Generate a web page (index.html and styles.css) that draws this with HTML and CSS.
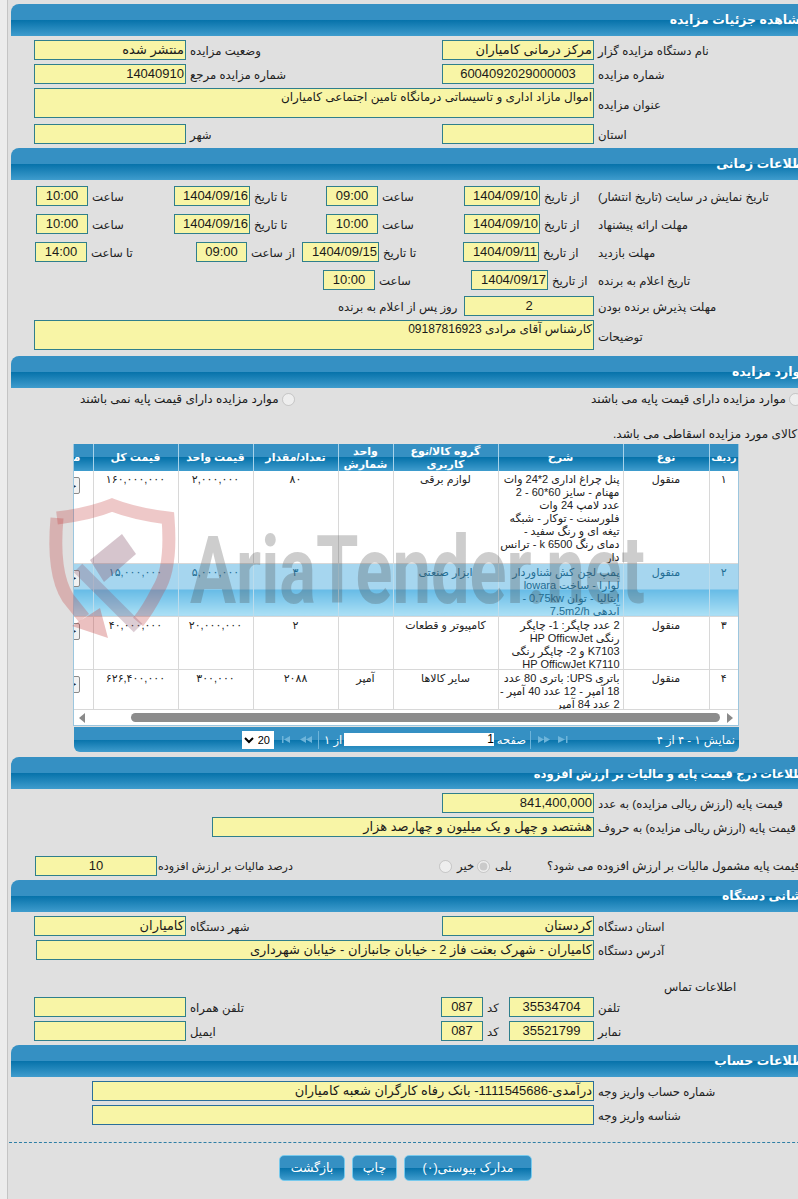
FILE: index.html
```html
<!DOCTYPE html>
<html lang="fa">
<head>
<meta charset="utf-8">
<title>مشاهده جزئیات مزایده</title>
<link rel="stylesheet" href="styles.css">
</head>
<body>
<div class="page">

<h2 class="sec">مشاهده جزئیات مزایده</h2>
<div class="row g-main mt4"><div class="f">منتشر شده</div><div class="l">وضعیت مزایده</div><div class="f">مرکز درمانی کامیاران</div><div class="l">نام دستگاه مزایده گزار</div></div>
<div class="row g-main mt4"><div class="f">14040910</div><div class="l">شماره مزایده مرجع</div><div class="f ctr">6004092029000003</div><div class="l">شماره مزایده</div></div>
<div class="row g-wide mt4 tall"><div class="f">اموال مازاد اداری و تاسیساتی درمانگاه تامین اجتماعی کامیاران</div><div class="l">عنوان مزایده</div></div>
<div class="row g-main mt6"><div class="f"></div><div class="l">شهر</div><div class="f"></div><div class="l">استان</div></div>

<h2 class="sec mt4">اطلاعات زمانی</h2>
<div class="row g-ta mt6"><div class="f ctr">10:00</div><div class="l">ساعت</div><div class="f">1404/09/16</div><div class="l">تا تاریخ</div><div class="f ctr">09:00</div><div class="l">ساعت</div><div class="f">1404/09/10</div><div class="l">از تاریخ</div><div class="l">تاریخ نمایش در سایت (تاریخ انتشار)</div></div>
<div class="row g-ta mt8"><div class="f ctr">10:00</div><div class="l">ساعت</div><div class="f">1404/09/16</div><div class="l">تا تاریخ</div><div class="f ctr">10:00</div><div class="l">ساعت</div><div class="f">1404/09/10</div><div class="l">از تاریخ</div><div class="l">مهلت ارائه پیشنهاد</div></div>
<div class="row g-tc mt8"><div class="f ctr">14:00</div><div class="l">تا ساعت</div><div class="f ctr">09:00</div><div class="l">از ساعت</div><div class="f">1404/09/15</div><div class="l">تا تاریخ</div><div class="f">1404/09/11</div><div class="l">از تاریخ</div><div class="l">مهلت بازدید</div></div>
<div class="row g-td mt8"><div class="f ctr">10:00</div><div class="l">ساعت</div><div class="f">1404/09/17</div><div class="l">از تاریخ</div><div class="l">تاریخ اعلام به برنده</div></div>
<div class="row g-te mt6"><div class="l flush">روز پس از اعلام به برنده</div><div class="f ctr">2</div><div class="l">مهلت پذیرش برنده بودن</div></div>
<div class="row g-wide mt4 tall"><div class="f">کارشناس آقای مرادی 09187816923</div><div class="l">توضیحات</div></div>

<h2 class="sec mt6">موارد مزایده</h2>
<div class="radios">
  <label class="rad rad-no"><span>موارد مزایده دارای قیمت پایه نمی باشند</span><input type="radio" disabled></label>
  <label class="rad rad-yes"><span>موارد مزایده دارای قیمت پایه می باشند</span><input type="radio" disabled></label>
</div>
<div class="note"><span class="note-t">کالای مورد مزایده اسقاطی می باشد.</span></div>

<div class="grid">
  <table>
    <colgroup><col class="c1"><col class="c2"><col class="c3"><col class="c4"><col class="c5"><col class="c6"><col class="c7"><col class="c8"><col class="c9"></colgroup>
    <thead><tr><th class="th-narrow">ردیف</th><th>نوع</th><th>شرح</th><th>گروه کالا/نوع<br>کاربری</th><th>واحد<br>شمارش</th><th>تعداد/مقدار</th><th>قیمت واحد</th><th>قیمت کل</th><th>مدارک</th></tr></thead>
    <tbody>
      <tr class="h92"><td>۱</td><td>منقول</td><td class="desc"><div class="ln">پنل چراغ اداری 2*24 وات<br>مهنام - سایز 60*60 - 2<br>عدد لامپ 24 وات<br>فلورسنت - توکار - شبگه<br>تیغه ای و رنگ سفید -<br>دمای رنگ k 6500 - ترانس<br>دار</div></td><td>لوازم برقی</td><td></td><td>۸۰</td><td>۲,۰۰۰,۰۰۰</td><td>۱۶۰,۰۰۰,۰۰۰</td><td class="act"><button class="mini">جزئیات</button></td></tr>
      <tr class="h53 hot"><td>۲</td><td>منقول</td><td class="desc"><div class="ln">پمپ لجن کش شناوردار<br>لوارا - ساخت lowara<br>ایتالیا - توان 0.75kw -<br>آبدهی 7.5m2/h</div></td><td>ابزار صنعتی</td><td></td><td>۳</td><td>۵,۰۰۰,۰۰۰</td><td>۱۵,۰۰۰,۰۰۰</td><td class="act"><button class="mini">جزئیات</button></td></tr>
      <tr class="h53"><td>۳</td><td>منقول</td><td class="desc"><div class="ln">2 عدد چاپگر: 1- چاپگر<br>رنگی HP OfficwJet<br>K7103 و 2- چاپگر رنگی<br>HP OfficwJet K7110</div></td><td>کامپیوتر و قطعات</td><td></td><td>۲</td><td>۲۰,۰۰۰,۰۰۰</td><td>۴۰,۰۰۰,۰۰۰</td><td class="act"><button class="mini">جزئیات</button></td></tr>
      <tr class="h40"><td>۴</td><td>منقول</td><td class="desc"><div class="ln">باتری UPS: باتری 80 عدد<br>18 آمپر - 12 عدد 40 آمپر -<br>2 عدد 84 آمپر</div></td><td>سایر کالاها</td><td>آمپر</td><td>۲۰۸۸</td><td>۳۰۰,۰۰۰</td><td>۶۲۶,۴۰۰,۰۰۰</td><td class="act"><button class="mini">جزئیات</button></td></tr>
    </tbody>
  </table>
  <div class="hscroll">
    <svg class="arr" width="6" height="10" viewBox="0 0 6 10"><path d="M6 0v10L0 5z"/></svg>
    <div class="thumb"></div>
    <svg class="arr" width="6" height="10" viewBox="0 0 6 10"><path d="M0 0v10l6-5z"/></svg>
  </div>
</div>
<div class="pager">
  <select class="psize"><option>20</option></select>
  <svg class="pi pi-first" width="8" height="7" viewBox="0 0 8 7"><path d="M0 0h1.500v7H0zM8 0v7L2 3.500z"/></svg>
  <svg class="pi pi-prev" width="12" height="7" viewBox="0 0 12 7"><path d="M6 0v7L0 3.500zM12 0v7L6 3.500z"/></svg>
  <span class="psep sep-a"></span>
  <span class="pt pt-of">از ۱</span>
  <input class="pnum" type="text" value="1" readonly>
  <span class="pt pt-page">صفحه</span>
  <span class="psep sep-b"></span>
  <svg class="pi pi-next" width="12" height="7" viewBox="0 0 12 7"><path d="M0 0v7l6-3.500zM6 0v7l6-3.500z"/></svg>
  <svg class="pi pi-last" width="10" height="7" viewBox="0 0 10 7"><path d="M0 0v7l7-3.500zM8 0h1.500v7H8z"/></svg>
  <span class="pt pt-info">نمایش ۱ - ۴ از ۴</span>
</div>

<h2 class="sec sec-long mt5">اطلاعات درج قیمت پایه و مالیات بر ارزش افزوده</h2>
<div class="row g-price mt4"><div class="f">841,400,000</div><div class="l">قیمت پایه (ارزش ریالی مزایده) به عدد</div></div>
<div class="row g-words mt4"><div class="f">هشتصد و چهل و یک میلیون و چهارصد هزار</div><div class="l">قیمت پایه (ارزش ریالی مزایده) به حروف</div></div>
<div class="row g-vat mt19">
  <div class="f ctr">10</div><div class="l sm">درصد مالیات بر ارزش افزوده</div>
  <input type="radio" disabled><span class="l pad5">خیر</span><input type="radio" checked disabled><span class="l pad5">بلی</span><div class="l flush">قیمت پایه مشمول مالیات بر ارزش افزوده می شود؟</div>
</div>

<h2 class="sec mt4">نشانی دستگاه</h2>
<div class="row g-main mt4"><div class="f">کامیاران</div><div class="l">شهر دستگاه</div><div class="f">کردستان</div><div class="l">استان دستگاه</div></div>
<div class="row g-addr mt4"><div class="f">کامیاران - شهرک بعثت فاز 2 - خیابان جانبازان - خیابان شهرداری</div><div class="l">آدرس دستگاه</div></div>
<div class="contact">اطلاعات تماس</div>
<div class="row g-tel"><div class="f"></div><div class="l">تلفن همراه</div><div class="f ctr">087</div><div class="l">کد</div><div class="f ctr">35534704</div><div class="l">تلفن</div></div>
<div class="row g-tel mt4"><div class="f"></div><div class="l">ایمیل</div><div class="f ctr">087</div><div class="l">کد</div><div class="f ctr">35521799</div><div class="l">نمابر</div></div>

<h2 class="sec mt4">اطلاعات حساب</h2>
<div class="row g-acc mt4"><div class="f blue">درآمدی-1111545686- بانک رفاه کارگران شعبه کامیاران</div><div class="l">شماره حساب واریز وجه</div></div>
<div class="row g-acc mt4"><div class="f blue"></div><div class="l">شناسه واریز وجه</div></div>
<div class="dash"></div>
<div class="btns">
  <button class="btn b-back">بازگشت</button>
  <button class="btn b-print">چاپ</button>
  <button class="btn b-docs">مدارک پیوستی(۰)</button>
</div>

</div>

<svg class="wm" width="660" height="150" viewBox="0 0 660 150" aria-hidden="true">
  <g class="wm-shield">
    <path class="wm-s" d="M57 20Q90 16 112 7Q135 16 168 20Q172 70 158 92Q148 112 138 124"/>
    <path class="wm-s" d="M57 20Q52 75 68 100L84 120"/>
    <path class="wm-a" d="M100 110L108 140L72 128z"/>
    <path class="wm-v" d="M78 70L138 130"/>
    <path class="wm-g" d="M90 62L122 36L136 56L104 84z"/>
  </g>
  <text class="wm-t" x="190" y="105" textLength="455" lengthAdjust="spacingAndGlyphs">AriaTender.net</text>
</svg>
</body>
</html>
```
FILE: styles.css
```css
* { box-sizing: border-box; }
html, body { margin: 0; padding: 0; height: 1199px; overflow: hidden; }
body {
  position: relative;
  background: #e0e0e0;
  color: #1a1a1a;
  font: 11.700px/20px "Liberation Sans", "DejaVu Sans", sans-serif;
}
.page {
  width: 840px;
  height: 1199px;
  padding: 4px 0 0 6px;
  background: #e0e0e0;
  position: relative;
}
.page::before {
  content: "";
  position: absolute;
  left: 0; top: 0; bottom: 0;
  width: 7px;
  background: #ececec;
  border-right: 1px solid #c4c4c4;
}
.sec {
  margin: 0 0 0 5px;
  height: 32px;
  padding: 0 32px 0 0;
  border-radius: 8px 0 0 0;
  background: linear-gradient(#3590c3 0, #3590c3 50%, #0672aa 50%, #3f9ccd 100%);
  color: #fff;
  font: bold 12.500px/33px "Liberation Sans", "DejaVu Sans", sans-serif;
  direction: rtl;
  text-align: right;
  white-space: nowrap;
}
.sec-long { font-size: 11.600px; }
.mt4 { margin-top: 4px; }
.mt5 { margin-top: 5px; }
.mt6 { margin-top: 6px; }
.mt8 { margin-top: 8px; }
.mt19 { margin-top: 19px; }

.row { display: grid; height: 20px; grid-template-rows: 20px; align-items: stretch; }
.row.tall { height: 30px; grid-template-rows: 30px; }
.f {
  height: 100%;
  border: 1px solid #2f7f8c;
  background: #f8f5a6;
  direction: rtl;
  text-align: right;
  padding: 0 1px;
  font-size: 13px;
  line-height: 18px;
  white-space: nowrap;
  overflow: hidden;
}
.tall .f { font-size: 12px; line-height: 16px; }
.tall .l { line-height: 34px; }
.f.ctr { text-align: center; }
.f.blue { border-color: #2a6f9a; }
.l {
  direction: rtl;
  text-align: left;
  padding-left: 4px;
  white-space: nowrap;
  line-height: 22px;
  color: #222;
}
.l.flush { padding-left: 0; }
.l.pad5 { padding-left: 5px; }
.l.sm { font-size: 11.100px; padding-left: 1px; }
.g-ta .l:last-child, .g-tc .l:last-child, .g-td .l:last-child { padding-left: 0; }

.g-main { padding-left: 28px; grid-template-columns: 152px 256px 152px 1fr; }
.g-wide { padding-left: 28px; grid-template-columns: 560px 1fr; }
.g-ta { padding-left: 30px; grid-template-columns: 52px 86px 76px 76px 52px 86px 76px 58px 1fr; }
.g-tc { padding-left: 29px; grid-template-columns: 52px 109px 51px 55px 77px 84px 76px 59px 1fr; }
.g-td { padding-left: 317px; grid-template-columns: 52px 96px 77px 50px 1fr; }
.g-te { padding-left: 332px; grid-template-columns: 126px 130px 1fr; }
.g-price { padding-left: 436px; grid-template-columns: 152px 1fr; }
.g-words { padding-left: 206px; grid-template-columns: 382px 1fr; }
.g-addr { padding-left: 30px; grid-template-columns: 558px 1fr; }
.g-acc { padding-left: 86px; grid-template-columns: 502px 1fr; }
.g-tel { padding-left: 28px; grid-template-columns: 152px 255px 42px 26px 85px 1fr; }
.g-vat {
  padding-left: 29px;
  grid-template-columns: 122px 282px 13px 25px 13px 57px 1fr;
  align-items: center;
}
.g-vat input { margin: 0; width: 13px; height: 13px; }
.g-vat .f { height: 20px; }

.radios { display: flex; height: 22px; padding-left: 74px; font-size: 12px; }
.rad { direction: ltr; display: flex; align-items: center; gap: 3px; height: 22px; white-space: nowrap; }
.rad span { direction: rtl; }
.rad input { margin: 0; width: 13px; height: 13px; }
.rad-no { width: 511px; }
.note {
  margin-top: 14px;
  padding-left: 607px;
  height: 20px;
  white-space: nowrap;
  text-align: left;
  font-size: 12px;
}
.note-t { display: inline-block; direction: rtl; }

.grid {
  margin: 0 0 0 67px;
  width: 666px;
  height: 282px;
  background: #fff;
  border: 1px solid #9cc6de;
  border-width: 0 1px 1px 1px;
  overflow: hidden;
  direction: rtl;
}
table { border-collapse: collapse; table-layout: fixed; width: 705px; font-size: 11px; line-height: 13px; }
.c1 { width: 29px; } .c2 { width: 86px; } .c3 { width: 125px; } .c4 { width: 105px; }
.c5 { width: 55px; } .c6 { width: 85px; } .c7 { width: 75px; } .c8 { width: 85px; } .c9 { width: 60px; }
th {
  height: 27px;
  padding: 0;
  color: #fff;
  font-weight: bold;
  font-size: 11px;
  line-height: 13px;
  background: linear-gradient(#3590c3 0, #3590c3 50%, #0672aa 50%, #3f9ccd 100%);
  border-left: 1px solid #a8d3ea;
  white-space: nowrap;
}
th.th-narrow { font-size: 9.500px; }
td {
  padding: 2px 0 0;
  vertical-align: top;
  text-align: center;
  border-left: 1px solid #d8d8d8;
  border-bottom: 1px solid #d8d8d8;
  white-space: nowrap;
  overflow: hidden;
  color: #222;
}
.h92 td { height: 92px; }
.h53 td { height: 53px; }
.h40 td { height: 40px; }
td.desc { text-align: right; padding-right: 3px; }
.ln { margin-bottom: -2px; }
td.act { text-align: right; padding: 6px 13px 0 0; }
.hot td {
  color: #1f6d94;
  background: linear-gradient(#a6d6ef 0, #a6d6ef 50%, #66bbe6 50%, #ace0f5 100%);
  border-left-color: #bcdcec;
}
.mini {
  display: block;
  width: 40px;
  height: 17px;
  padding: 0 2px;
  border: 1px solid #8a8a8a;
  border-radius: 2px;
  background: #f2f2f2;
  font: 10px/14px "Liberation Sans", "DejaVu Sans", sans-serif;
  text-align: right;
  direction: rtl;
  color: #222;
}
.hscroll {
  direction: ltr;
  height: 16px;
  display: flex;
  align-items: center;
  padding: 0 5px;
  background: #fff;
}
.arr { fill: #8a8a8a; flex: none; }
.thumb { height: 9px; margin: 0 7px 0 46px; flex: 1; border-radius: 5px; background: #8c8c8c; }

.pager {
  margin: 1px 0 0 68px;
  width: 665px;
  height: 25px;
  display: flex;
  align-items: center;
  direction: ltr;
  border-radius: 0 0 6px 6px;
  background: linear-gradient(#3590c3 0, #3590c3 50%, #0672aa 50%, #3f9ccd 100%);
  color: #fff;
  font-size: 11.500px;
}
.psize {
  width: 32px;
  height: 18px;
  margin: 0 0 0 168px;
  border: 0;
  padding: 0;
  background: #fff;
  font: 11px "Liberation Sans", sans-serif;
  direction: rtl;
  flex: none;
}
.pi { fill: #6db4da; flex: none; }
.pi-first { margin-left: 8px; }
.pi-prev { margin-left: 10px; }
.psep { width: 1px; height: 18px; background: #6db4da; flex: none; }
.sep-a { margin-left: 6px; }
.pt { direction: rtl; white-space: nowrap; flex: none; }
.pt-of { margin-left: 5px; width: 20px; text-align: left; }
.pnum {
  width: 150px;
  height: 13px;
  margin: 0;
  padding: 0;
  border: 0;
  background: #fff;
  text-align: right;
  font: 12px/13px "Liberation Sans", sans-serif;
  flex: none;
}
.pt-page { margin-left: 4px; width: 28px; }
.sep-b { margin-left: 4px; }
.pi-next { margin-left: 7px; }
.pi-last { margin-left: 8px; }
.pt-info { margin-left: auto; margin-right: 4px; }

.contact { height: 37px; padding: 17px 0 0 658px; line-height: 20px; white-space: nowrap; }
.dash { margin: 17px 0 0 3px; border-top: 1px dashed #2f7fa5; height: 0; }
.btns { display: flex; margin: 12px 0 0 273px; gap: 7px; }
.btn {
  height: 26px;
  padding: 0;
  border: 1px solid #77c9ec;
  border-radius: 5px;
  background: linear-gradient(#3590c3 0, #3590c3 50%, #0672aa 50%, #3f9ccd 100%);
  color: #fff;
  font: 12.500px/22px "Liberation Sans", "DejaVu Sans", sans-serif;
  direction: rtl;
}
.b-back { width: 66px; }
.b-print { width: 45px; }
.b-docs { width: 128px; }

.wm { position: absolute; left: 0; top: 498px; pointer-events: none; }
.wm-s { fill: none; stroke: #c23a3a; stroke-width: 13; opacity: .28; }
.wm-a { fill: #c23a3a; opacity: .32; }
.wm-v { fill: none; stroke: #8a5a70; stroke-width: 12; opacity: .3; }
.wm-g { fill: #8a5a70; opacity: .35; }
.wm-t { font: bold 95px "Roboto", "Liberation Sans", sans-serif; fill: #4a4a4a; opacity: .27; }
```
